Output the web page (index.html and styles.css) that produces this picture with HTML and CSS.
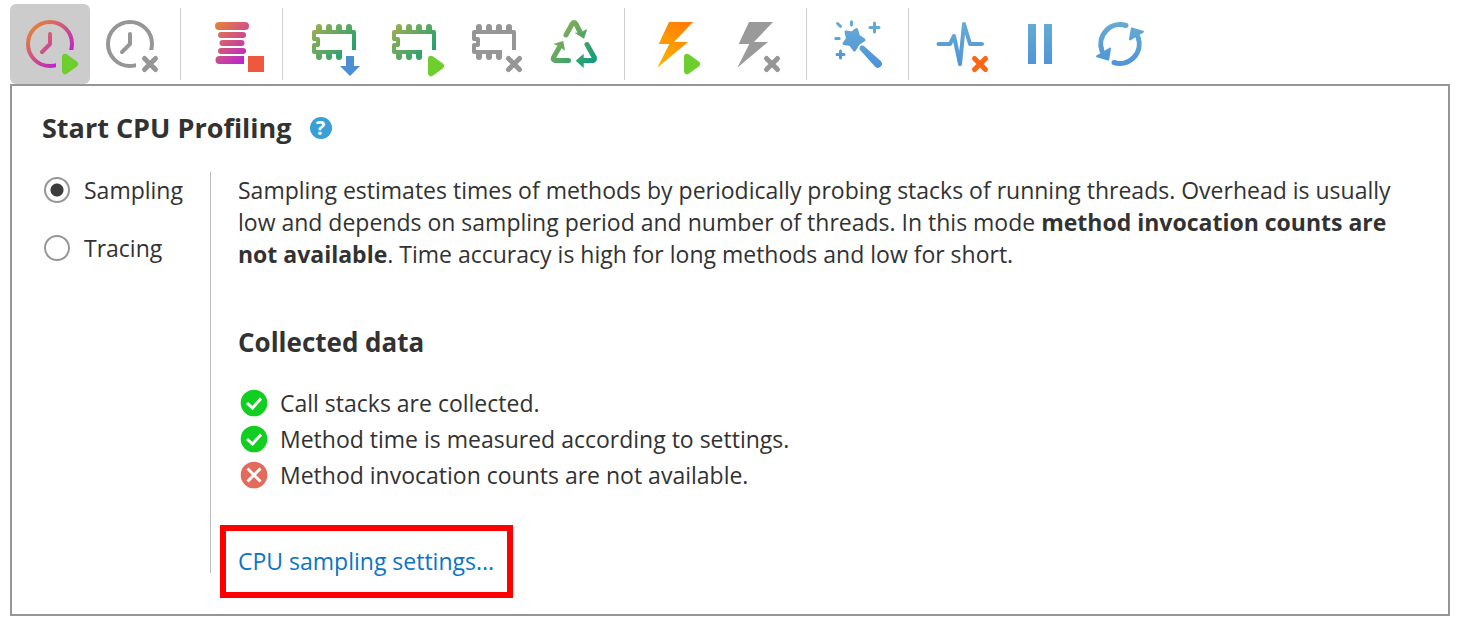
FILE: index.html
```html
<!DOCTYPE html>
<html lang="en">
<head>
    <meta charset="UTF-8">
    <meta name="viewport" content="width=device-width, initial-scale=1.0">
    <title>Start CPU Profiling</title>
    <link rel="stylesheet" href="styles.css">
</head>
<body>
    <!-- shared gradients and icon parts -->
    <svg class="defs" width="0" height="0" aria-hidden="true">
        <defs>
            <linearGradient id="cpu" gradientUnits="userSpaceOnUse" x1="22" y1="22" x2="56" y2="58">
                <stop offset="0" stop-color="#e5813a"/>
                <stop offset="1" stop-color="#b81ed6"/>
            </linearGradient>
            <linearGradient id="mem" gradientUnits="userSpaceOnUse" x1="18" y1="20" x2="58" y2="56">
                <stop offset="0" stop-color="#a0b04e"/>
                <stop offset="1" stop-color="#149f78"/>
            </linearGradient>
            <linearGradient id="bolt" gradientUnits="userSpaceOnUse" x1="52" y1="18" x2="24" y2="60">
                <stop offset="0" stop-color="#ff7a08"/>
                <stop offset="1" stop-color="#ffb200"/>
            </linearGradient>
            <linearGradient id="blue" gradientUnits="userSpaceOnUse" x1="40" y1="18" x2="40" y2="62">
                <stop offset="0" stop-color="#66abd3"/>
                <stop offset="1" stop-color="#4e94d9"/>
            </linearGradient>
            <clipPath id="corner"><path d="M0 0H80V46H46V80H0z"/></clipPath>
            <g id="clock" fill="none" stroke-width="4">
                <circle cx="40" cy="40" r="22" clip-path="url(#corner)"/>
                <path d="M40 30V40L32 48" stroke-linecap="round" stroke-linejoin="round"/>
            </g>
            <g id="chip">
                <path d="M60 46V28H20V35H24V41H20V48H48" fill="none" stroke-width="4" stroke-linejoin="round"/>
                <path stroke="none" d="M22 28V23a3 3 0 0 1 6 0V28zM32 28V23a3 3 0 0 1 6 0V28zM42 28V23a3 3 0 0 1 6 0V28zM52 28V23a3 3 0 0 1 6 0V28zM22 48V53a3 3 0 0 0 6 0V48zM32 48V53a3 3 0 0 0 6 0V48zM42 48V53a3 3 0 0 0 6 0V48z"/>
            </g>
            <path id="flash" d="M33 18H57L38 38H52L21.3 63.7L33.3 40H22.7z"/>
            <path id="play" d="M55 52.7L65 60L55 67.3z" fill="#6ece2d" stroke="#6ece2d" stroke-width="6" stroke-linejoin="round"/>
            <path id="cross" d="M54.5 54.5L65.5 65.5M65.5 54.5L54.5 65.5" fill="none" stroke-width="5" stroke-linecap="round"/>
        </defs>
    </svg>

    <div class="toolbar">
        <button class="btn active" aria-label="Start CPU profiling">
            <svg viewBox="0 0 80 80"><use href="#clock" stroke="url(#cpu)"/><use href="#play"/></svg>
        </button>
        <button class="btn" aria-label="Stop CPU profiling">
            <svg viewBox="0 0 80 80" stroke="#969696"><use href="#clock"/><use href="#cross"/></svg>
        </button>
        <span class="sep"></span>
        <button class="btn" aria-label="Thread stacks">
            <svg viewBox="0 0 80 80">
                <g fill="url(#cpu)">
                    <rect x="23" y="18" width="34" height="8" rx="4"/>
                    <rect x="26" y="28" width="28" height="6" rx="3"/>
                    <rect x="27.5" y="36" width="25" height="6" rx="3"/>
                    <rect x="26" y="44" width="28" height="6" rx="3"/>
                    <path d="M52 52H27.5a4 4 0 0 0 0 8H52z"/>
                </g>
                <rect x="56" y="52" width="16" height="16" fill="#ee583c"/>
            </svg>
        </button>
        <span class="sep"></span>
        <button class="btn" aria-label="Capture memory snapshot">
            <svg viewBox="0 0 80 80">
                <use href="#chip" fill="url(#mem)" stroke="url(#mem)"/>
                <path d="M52 52H60V62H66L56 72L46 62H52z" fill="#4a90d2"/>
            </svg>
        </button>
        <button class="btn" aria-label="Start allocation profiling">
            <svg viewBox="0 0 80 80"><use href="#chip" fill="url(#mem)" stroke="url(#mem)"/><use href="#play" x="2" y="2"/></svg>
        </button>
        <button class="btn" aria-label="Stop allocation profiling">
            <svg viewBox="0 0 80 80" fill="#969696" stroke="#969696"><use href="#chip"/><use href="#cross"/></svg>
        </button>
        <button class="btn" aria-label="Force garbage collection">
            <svg viewBox="0 0 80 80">
                <g fill="none" stroke="url(#mem)" stroke-width="5" stroke-linecap="round" stroke-linejoin="round">
                    <path d="M32 31L38.2 19.7Q40 17.2 41.8 19.7L46 28"/>
                    <path d="M34.5 56.5H21Q18.5 56 19.5 53.5L25.5 43"/>
                    <path d="M53 40.5L60.3 53.5Q61 56 59 56.5H48"/>
                </g>
                <path fill="url(#mem)" d="M53.3 25L50 34.7L40.5 28.7L46 28.5zM29.3 37L31 46.7L26 43L19.5 39.7zM41.7 56.7L49.7 49.7V64z"/>
            </svg>
        </button>
        <span class="sep"></span>
        <button class="btn" aria-label="Start monitor profiling">
            <svg viewBox="0 0 80 80"><use href="#flash" fill="url(#bolt)"/><use href="#play" x="-4"/></svg>
        </button>
        <button class="btn" aria-label="Stop monitor profiling">
            <svg viewBox="0 0 80 80"><use href="#flash" fill="#9a9a9a"/><use href="#cross" x="-4" stroke="#969696"/></svg>
        </button>
        <span class="sep"></span>
        <button class="btn" aria-label="Inspections">
            <svg viewBox="0 0 80 80" fill="url(#blue)" stroke="url(#blue)" stroke-linecap="round" stroke-linejoin="round">
                <path stroke-width="3" d="M38.5 25.5L40.5 32L46 36L40.5 39.5L36.5 46L32.5 40.5L26 39.5L29.5 34.5L28 28L34 29z"/>
                <path stroke="none" d="M46.5 42.5L62.7 57a3.9 3.9 0 0 1-5.5 5.7L42.3 46.3a2.8 2.8 0 0 1 4.2-3.8z"/>
                <path stroke-width="3" fill="none" d="M33.5 17.8V21M19.5 19.5L22.5 22.3M17.8 34.5H21.2M56.5 19V28M52 23.5H61M22.5 47V54M19 50.5H26"/>
            </svg>
        </button>
        <span class="sep"></span>
        <button class="btn" aria-label="Clear telemetry">
            <svg viewBox="0 0 80 80">
                <path d="M18.5 40H30L34 32L40 60L44 20L50 40H62" fill="none" stroke="url(#blue)" stroke-width="4" stroke-linecap="round" stroke-linejoin="round"/>
                <use href="#cross" stroke="#ff6612"/>
            </svg>
        </button>
        <button class="btn" aria-label="Pause">
            <svg viewBox="0 0 80 80"><path d="M28 20h8v40h-8zM44 20h8v40h-8z" fill="url(#blue)"/></svg>
        </button>
        <button class="btn" aria-label="Refresh">
            <svg viewBox="0 0 80 80">
                <path d="M46 21.5A19.5 19.5 0 0 0 22 47M34 58.5A19.5 19.5 0 0 0 58 33" fill="none" stroke="url(#blue)" stroke-width="5" stroke-linecap="round"/>
                <path d="M17 52.3L28.2 55.5L30 44.5zM63 27.7L51.8 24.5L50 35.5z" fill="url(#blue)" stroke="url(#blue)" stroke-width="2" stroke-linejoin="round"/>
            </svg>
        </button>
    </div>

    <div class="panel">
        <h1>Start CPU Profiling
            <a class="help" href="#" aria-label="Help">?</a>
        </h1>
        <div class="content">
            <div class="modes">
                <label><input type="radio" name="mode" checked>Sampling</label>
                <label><input type="radio" name="mode">Tracing</label>
            </div>
            <div class="details">
                <p>Sampling estimates times of methods by periodically probing stacks of running threads. Overhead is usually low and depends on sampling period and number of threads. In this mode <b>method invocation counts are not available</b>. Time accuracy is high for long methods and low for short.</p>
                <h2>Collected data</h2>
                <ul>
                    <li>
                        <svg viewBox="0 0 28 28"><circle cx="14" cy="14" r="13.3" fill="#12ce21"/><path d="M7 14L12.5 19L21 9.5" fill="none" stroke="#fff" stroke-width="3"/></svg>
                        Call stacks are collected.
                    </li>
                    <li>
                        <svg viewBox="0 0 28 28"><circle cx="14" cy="14" r="13.3" fill="#12ce21"/><path d="M7 14L12.5 19L21 9.5" fill="none" stroke="#fff" stroke-width="3"/></svg>
                        Method time is measured according to settings.
                    </li>
                    <li>
                        <svg viewBox="0 0 28 28"><circle cx="14" cy="14" r="13.3" fill="#e26b5c"/><path d="M7.5 7.5L20.5 20.5M20.5 7.5L7.5 20.5" fill="none" stroke="#fff" stroke-width="3"/></svg>
                        Method invocation counts are not available.
                    </li>
                </ul>
                <div class="highlight"><a href="#">CPU sampling settings...</a></div>
            </div>
        </div>
    </div>
</body>
</html>
```
FILE: styles.css
```css
* {
    padding: 0;
    margin: 0;
    box-sizing: border-box;
}

body {
    padding: 4px 10px;
    background-color: #fff;
    color: #323232;
    font-family: "Segoe UI", "Open Sans", "Noto Sans", sans-serif;
    font-size: 23px;
    line-height: 32px;
}

.defs {
    position: absolute;
}

.toolbar {
    display: flex;
    align-items: center;
}

.btn {
    flex: none;
    width: 80px;
    height: 80px;
    border: none;
    border-radius: 6px;
    background: none;
    cursor: pointer;
}

.btn svg {
    display: block;
    width: 80px;
    height: 80px;
}

.btn.active {
    background-color: #ccc;
}

.sep {
    flex: none;
    width: 1px;
    height: 72px;
    margin: 0 11px 0 10px;
    background-color: #cfcfcf;
}

.panel {
    padding: 26px 32px 16px 30px;
    border: 2px solid #969696;
}

h1 {
    display: flex;
    align-items: center;
    gap: 18px;
    font-size: 27px;
    line-height: 32px;
}

.help {
    width: 22px;
    height: 22px;
    border-radius: 50%;
    background-color: #389fd7;
    color: #fff;
    font-size: 20px;
    line-height: 22px;
    text-align: center;
    text-decoration: none;
}

.content {
    display: flex;
    margin-top: 28px;
}

.modes {
    flex: none;
    display: flex;
    flex-direction: column;
    gap: 26px;
    width: 169px;
    height: 401px;
    padding: 2px;
    border-right: 1px solid #bdbdbd;
}

.modes label {
    display: flex;
    align-items: center;
    gap: 14px;
}

.modes input {
    appearance: none;
    width: 26px;
    height: 26px;
    border: 2px solid #969696;
    border-radius: 50%;
}

.modes input:checked {
    background: radial-gradient(circle, #3c3c3c 6px, #fff 7px);
}

.details {
    flex: 1;
    padding: 2px 0 0 9px;
}

p, h2, ul {
    padding-left: 18px;
}

h2 {
    margin-top: 56px;
    font-size: 26px;
}

ul {
    margin-top: 27px;
    list-style: none;
}

li {
    display: flex;
    align-items: center;
    gap: 12px;
    padding-left: 2px;
    line-height: 36px;
}

li svg {
    width: 28px;
    height: 28px;
}

.highlight {
    width: fit-content;
    margin-top: 32px;
    padding: 14px 13px 15px 12px;
    border: 6px solid #f00;
}

.highlight a {
    color: #0a74c8;
    text-decoration: none;
}
```
